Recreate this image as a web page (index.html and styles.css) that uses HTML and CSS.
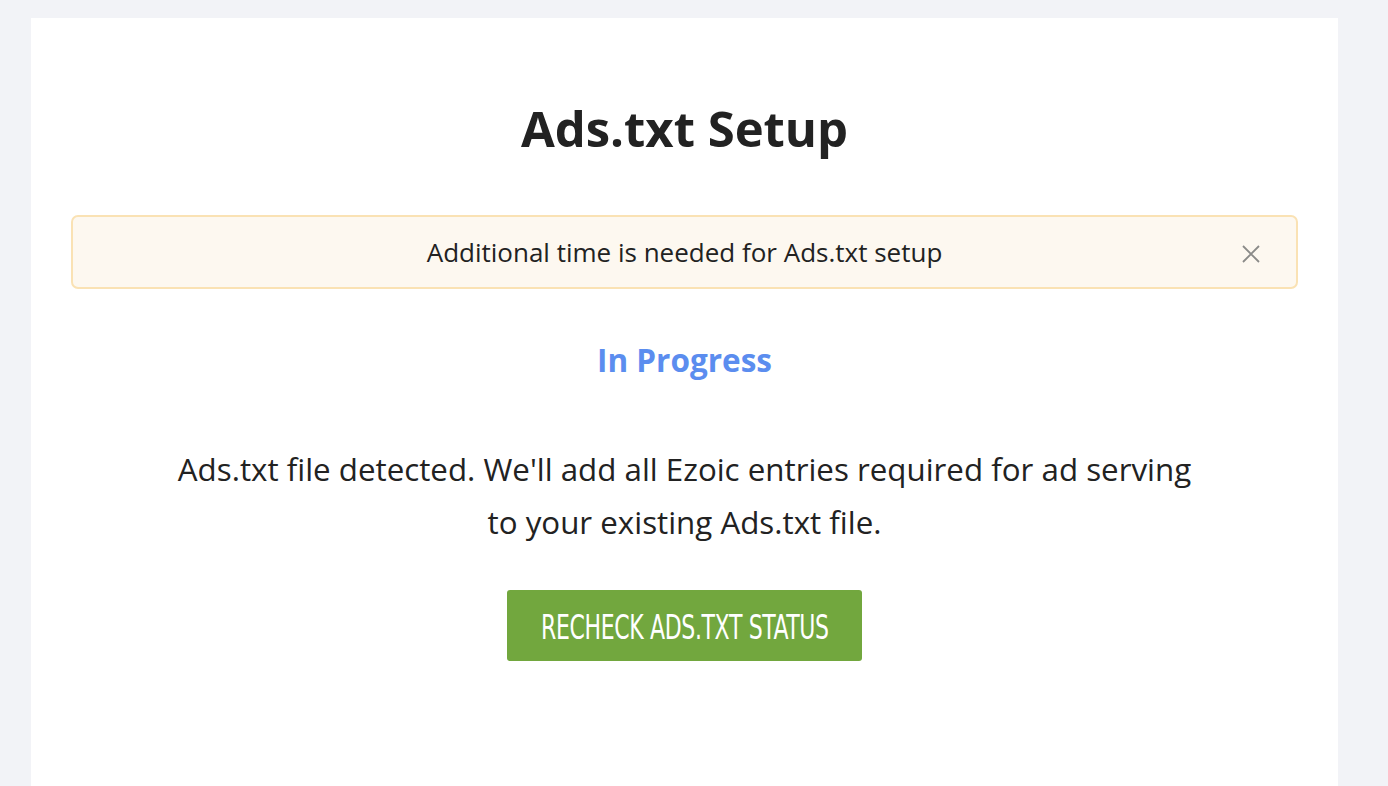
FILE: index.html
```html
<!DOCTYPE html>
<html>
<head>
<meta charset="utf-8">
<link rel="stylesheet" href="styles.css">
</head>
<body>
<div class="card">
  <h1 class="title">Ads.txt Setup</h1>
  <div class="alert">
    <span class="alert-text">Additional time is needed for Ads.txt setup</span>
    <span class="close" aria-label="close">
      <svg width="18" height="18" viewBox="0 0 18 18"><path d="M1 1L17 17M17 1L1 17" stroke="#8a8a88" stroke-width="1.8" fill="none"/></svg>
    </span>
  </div>
  <div class="status">In Progress</div>
  <p class="desc">Ads.txt file detected. We'll add all Ezoic entries required for ad serving<br>to your existing Ads.txt file.</p>
  <div class="actions">
    <button class="btn"><span class="btn-label">RECHECK ADS.TXT STATUS</span></button>
  </div>
</div>
</body>
</html>
```
FILE: styles.css
```css
html, body {
  margin: 0;
  padding: 0;
  background: #f2f3f7;
  height: 100%;
  overflow: hidden;
}
body {
  padding: 18px 50px 0 31px;
  font-family: "Open Sans", "Noto Sans", sans-serif;
  color: #222;
}
.card {
  background: #fff;
  width: 1307px;
  height: 800px;
  padding: 0 40px;
  box-sizing: border-box;
  display: flex;
  flex-direction: column;
  align-items: stretch;
}
.title {
  margin: 77px 0 0;
  text-align: center;
  font-size: 49px;
  line-height: 66px;
  font-weight: 700;
  color: #222;
}
.alert {
  margin-top: 54px;
  height: 74px;
  box-sizing: border-box;
  border: 2px solid #fae2b4;
  border-radius: 7px;
  background: #fdf8f0;
  display: flex;
  align-items: center;
  justify-content: center;
  position: relative;
}
.alert-text {
  font-size: 26px;
  color: #222;
}
.close {
  position: absolute;
  right: 36px;
  top: 28px;
  width: 18px;
  height: 18px;
  display: flex;
}
.status {
  margin-top: 50px;
  text-align: center;
  font-size: 31.5px;
  font-weight: 700;
  color: #5b8def;
  line-height: 42px;
}
.desc {
  margin: 62px 0 0;
  text-align: center;
  font-size: 31.3px;
  line-height: 53px;
  color: #222;
}
.actions {
  margin-top: 41px;
  display: flex;
  justify-content: center;
}
.btn {
  width: 355px;
  height: 71px;
  background: #72a73e;
  border: none;
  border-radius: 3px;
  color: #fff;
  display: flex;
  align-items: center;
  justify-content: center;
  padding: 0;
  overflow: hidden;
}
.btn-label {
  display: inline-block;
  font-family: "DejaVu Sans Condensed", "DejaVu Sans", sans-serif;
  font-size: 34px;
  white-space: nowrap;
  transform: scaleX(0.72);
  letter-spacing: -0.5px;
  padding-top: 2px;
}
```
